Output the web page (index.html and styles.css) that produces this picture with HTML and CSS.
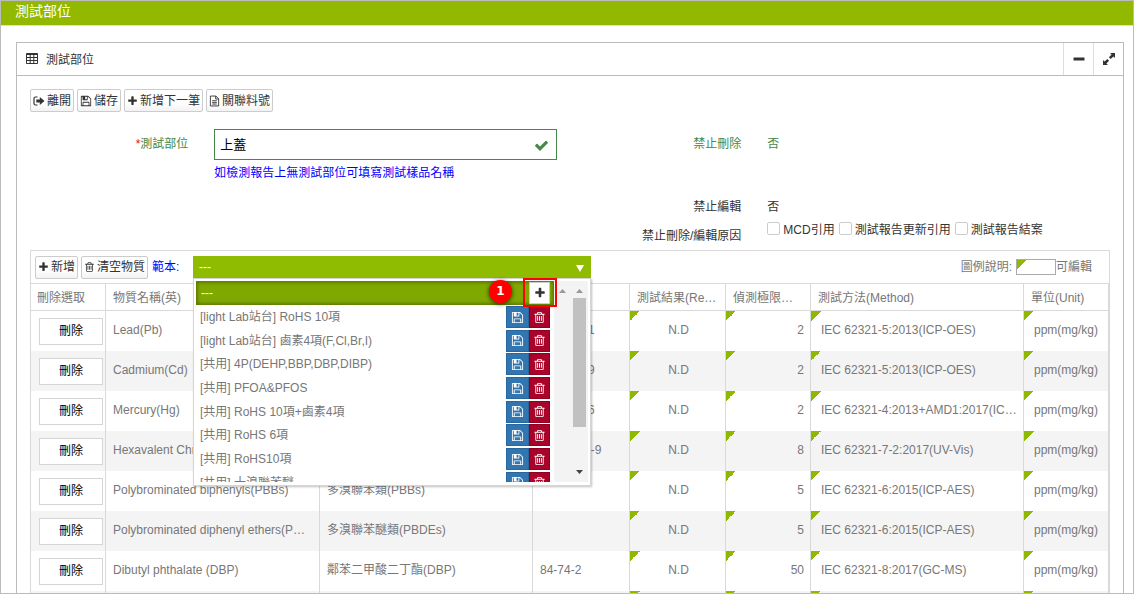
FILE: index.html
```html
<!DOCTYPE html>
<html lang="zh-Hant">
<head>
<meta charset="utf-8">
<title>測試部位</title>
<link rel="stylesheet" href="styles.css">
</head>
<body>
<svg class="sprite" aria-hidden="true">
  <symbol id="plus" viewBox="0 0 1792 1792"><path d="M1600 736v192q0 40-28 68t-68 28h-416v416q0 40-28 68t-68 28h-192q-40 0-68-28t-28-68v-416h-416q-40 0-68-28t-28-68v-192q0-40 28-68t68-28h416v-416q0-40 28-68t68-28h192q40 0 68 28t28 68v416h416q40 0 68 28t28 68z"/></symbol>
  <symbol id="trash" viewBox="0 0 1792 1792"><path d="M704 736v576q0 14-9 23t-23 9h-64q-14 0-23-9t-9-23v-576q0-14 9-23t23-9h64q14 0 23 9t9 23zm256 0v576q0 14-9 23t-23 9h-64q-14 0-23-9t-9-23v-576q0-14 9-23t23-9h64q14 0 23 9t9 23zm256 0v576q0 14-9 23t-23 9h-64q-14 0-23-9t-9-23v-576q0-14 9-23t23-9h64q14 0 23 9t9 23zm128 724v-948h-896v948q0 22 7 40.500t14.500 27 10.500 8.500h832q3 0 10.500-8.500t14.500-27 7-40.500zm-672-1076h448l-48-117q-7-9-17-11h-317q-10 2-17 11zm928 32v64q0 14-9 23t-23 9h-96v948q0 83-47 143.500t-113 60.500h-832q-66 0-113-58.500t-47-141.500v-952h-96q-14 0-23-9t-9-23v-64q0-14 9-23t23-9h309l70-167q15-37 54-63t79-26h320q40 0 79 26t54 63l70 167h309q14 0 23 9t9 23z"/></symbol>
  <symbol id="save" viewBox="0 0 1792 1792"><path d="M512 1536h768v-384h-768v384zm896 0h128v-896q0-14-10-38.500t-20-34.500l-281-281q-10-10-34-20t-39-10v416q0 40-28 68t-68 28h-576q-40 0-68-28t-28-68v-416h-128v1280h128v-416q0-40 28-68t68-28h832q40 0 68 28t28 68v416zm-384-928v-320q0-13-9.500-22.500t-22.500-9.500h-192q-13 0-22.500 9.500t-9.500 22.500v320q0 13 9.500 22.500t22.500 9.500h192q13 0 22.500-9.500t9.500-22.500zm640 32v928q0 40-28 68t-68 28h-1344q-40 0-68-28t-28-68v-1344q0-40 28-68t68-28h928q40 0 88 20t76 48l280 280q28 28 48 76t20 88z"/></symbol>
  <symbol id="check" viewBox="0 0 1792 1792"><path d="M1671 566q0 40-28 68l-724 724-136 136q-28 28-68 28t-68-28l-136-136-362-362q-28-28-28-68t28-68l136-136q28-28 68-28t68 28l294 295 656-657q28-28 68-28t68 28l136 136q28 28 28 68z"/></symbol>
  <symbol id="leave" viewBox="0 0 12 12"><path d="M4.500 2H2.500Q1 2 1 3.500v5Q1 10 2.500 10H4.500" fill="none" stroke="currentColor" stroke-width="1.200"/><path d="M3.300 4.600H6.800V2L11.500 6 6.800 10V7.400H3.300z"/></symbol>
  <symbol id="file" viewBox="0 0 12 12"><path d="M1.500.6h6l3 3v7.800h-9zM7.300.6v3.200h3.200M3.500 5.700h5M3.500 7.500h5M3.500 9.300h5" fill="none" stroke="currentColor" stroke-width="1"/></symbol>
  <symbol id="grid" viewBox="0 0 12 12"><path fill-rule="evenodd" d="M1 0h10q1 0 1 1v9q0 1-1 1H1q-1 0-1-1V1q0-1 1-1zM1 2v2h2.700V2zM4.700 2v2h2.600V2zM8.300 2v2H11V2zM1 5v2h2.700V5zM4.700 5v2h2.600V5zM8.300 5v2H11V5zM1 8v2h2.700V8zM4.700 8v2h2.600V8zM8.300 8v2H11V8z"/></symbol>
  <symbol id="expand" viewBox="0 0 12 12"><path d="M7 0h5v5l-1.600-1.600-2.700 2.700-1.800-1.800 2.700-2.700zM5 12H0V7l1.600 1.600 2.700-2.700 1.800 1.800-2.700 2.700z"/></symbol>
  <symbol id="minus" viewBox="0 0 12 12"><rect x=".5" y="4.500" width="11" height="3" rx=".5"/></symbol>
</svg>
<div class="page">
  <header class="page-title">測試部位</header>
  <main class="panel">
    <div class="panel-head">
      <svg class="icon"><use href="#grid"/></svg>
      <h1 class="panel-name">測試部位</h1>
      <button class="tool" aria-label="收合"><svg class="icon"><use href="#minus"/></svg></button>
      <button class="tool" aria-label="展開"><svg class="icon"><use href="#expand"/></svg></button>
    </div>
    <div class="actions">
      <button class="btn"><svg class="icon"><use href="#leave"/></svg>離開</button>
      <button class="btn"><svg class="icon"><use href="#save"/></svg>儲存</button>
      <button class="btn"><svg class="icon narrow"><use href="#plus"/></svg>新增下一筆</button>
      <button class="btn"><svg class="icon narrow"><use href="#file"/></svg>關聯料號</button>
    </div>
    <div class="form">
      <label class="label valid" for="part"><span class="required">*</span>測試部位</label>
      <div class="field">
        <div class="input-wrap"><input class="input" id="part" type="text" value="上蓋"><svg class="icon input-check"><use href="#check"/></svg></div>
        <p class="hint">如檢測報告上無測試部位可填寫測試樣品名稱</p>
      </div>
      <span class="label valid">禁止刪除</span>
      <span class="field value valid">否</span>
      <span class="label label-edit">禁止編輯</span>
      <span class="field value">否</span>
      <span class="label label-reason">禁止刪除/編輯原因</span>
      <div class="field checks">
        <label class="check"><input class="box" type="checkbox">MCD引用</label>
        <label class="check"><input class="box" type="checkbox">測試報告更新引用</label>
        <label class="check"><input class="box" type="checkbox">測試報告結案</label>
      </div>
    </div>
    <section class="grid">
      <div class="grid-bar">
        <button class="btn"><svg class="icon narrow"><use href="#plus"/></svg>新增</button>
        <button class="btn"><svg class="icon narrow"><use href="#trash"/></svg>清空物質</button>
        <label class="template-label" for="template">範本:</label>
        <div class="dropdown">
          <select class="select" id="template"><option>---</option></select>
          <svg class="caret" viewBox="0 0 8 7"><path d="M0 0h8L4 7z"/></svg>
          <div class="menu">
            <div class="menu-body">
              <div class="current">---<button class="add" aria-label="新增範本"><svg class="icon"><use href="#plus"/></svg></button></div>
              <ul class="items">
                <li class="item"><span class="item-name">[light Lab站台] RoHS 10項</span><button class="mini save" aria-label="儲存"><svg class="icon"><use href="#save"/></svg></button><button class="mini remove" aria-label="刪除"><svg class="icon"><use href="#trash"/></svg></button></li>
                <li class="item"><span class="item-name">[light Lab站台] 鹵素4項(F,Cl,Br,I)</span><button class="mini save" aria-label="儲存"><svg class="icon"><use href="#save"/></svg></button><button class="mini remove" aria-label="刪除"><svg class="icon"><use href="#trash"/></svg></button></li>
                <li class="item"><span class="item-name">[共用] 4P(DEHP,BBP,DBP,DIBP)</span><button class="mini save" aria-label="儲存"><svg class="icon"><use href="#save"/></svg></button><button class="mini remove" aria-label="刪除"><svg class="icon"><use href="#trash"/></svg></button></li>
                <li class="item"><span class="item-name">[共用] PFOA&amp;PFOS</span><button class="mini save" aria-label="儲存"><svg class="icon"><use href="#save"/></svg></button><button class="mini remove" aria-label="刪除"><svg class="icon"><use href="#trash"/></svg></button></li>
                <li class="item"><span class="item-name">[共用] RoHS 10項+鹵素4項</span><button class="mini save" aria-label="儲存"><svg class="icon"><use href="#save"/></svg></button><button class="mini remove" aria-label="刪除"><svg class="icon"><use href="#trash"/></svg></button></li>
                <li class="item"><span class="item-name">[共用] RoHS 6項</span><button class="mini save" aria-label="儲存"><svg class="icon"><use href="#save"/></svg></button><button class="mini remove" aria-label="刪除"><svg class="icon"><use href="#trash"/></svg></button></li>
                <li class="item"><span class="item-name">[共用] RoHS10項</span><button class="mini save" aria-label="儲存"><svg class="icon"><use href="#save"/></svg></button><button class="mini remove" aria-label="刪除"><svg class="icon"><use href="#trash"/></svg></button></li>
                <li class="item"><span class="item-name">[共用] 十溴聯苯醚</span><button class="mini save" aria-label="儲存"><svg class="icon"><use href="#save"/></svg></button><button class="mini remove" aria-label="刪除"><svg class="icon"><use href="#trash"/></svg></button></li>
              </ul>
            </div>
            <div class="track">
              <svg class="arrow dim" viewBox="0 0 7 4"><path d="M0 4h7L3.500 0z"/></svg>
            </div>
            <div class="track">
              <svg class="arrow dim" viewBox="0 0 7 4"><path d="M0 4h7L3.500 0z"/></svg>
              <div class="thumb"></div>
              <svg class="arrow end" viewBox="0 0 7 4"><path d="M0 0h7L3.500 4z"/></svg>
            </div>
            <div class="mark"></div>
            <div class="step">1</div>
          </div>
        </div>
        <div class="legend">圖例說明: <span class="swatch"></span>可編輯</div>
      </div>
      <table class="table">
        <colgroup><col class="c-del"><col class="c-name"><col class="c-name-zh"><col class="c-cas"><col class="c-result"><col class="c-limit"><col class="c-method"><col class="c-unit"></colgroup>
        <thead><tr><th>刪除選取</th><th>物質名稱(英)</th><th>物質名稱(中)</th><th>CAS No.</th><th>測試結果(Result)</th><th>偵測極限值(MDL)</th><th>測試方法(Method)</th><th>單位(Unit)</th></tr></thead>
        <tbody>
          <tr><td><button class="del">刪除</button></td><td>Lead(Pb)</td><td>鉛(Pb)</td><td>7439-92-1</td><td class="edit mid">N.D</td><td class="edit num">2</td><td class="edit">IEC 62321-5:2013(ICP-OES)</td><td class="edit">ppm(mg/kg)</td></tr>
          <tr><td><button class="del">刪除</button></td><td>Cadmium(Cd)</td><td>鎘(Cd)</td><td>7440-43-9</td><td class="edit mid">N.D</td><td class="edit num">2</td><td class="edit">IEC 62321-5:2013(ICP-OES)</td><td class="edit">ppm(mg/kg)</td></tr>
          <tr><td><button class="del">刪除</button></td><td>Mercury(Hg)</td><td>汞(Hg)</td><td>7439-97-6</td><td class="edit mid">N.D</td><td class="edit num">2</td><td class="edit">IEC 62321-4:2013+AMD1:2017(ICP-OES)</td><td class="edit">ppm(mg/kg)</td></tr>
          <tr><td><button class="del">刪除</button></td><td>Hexavalent Chromium(Cr6+)</td><td>六價鉻(Cr6+)</td><td>18540-29-9</td><td class="edit mid">N.D</td><td class="edit num">8</td><td class="edit">IEC 62321-7-2:2017(UV-Vis)</td><td class="edit">ppm(mg/kg)</td></tr>
          <tr><td><button class="del">刪除</button></td><td>Polybrominated biphenyls(PBBs)</td><td>多溴聯苯類(PBBs)</td><td></td><td class="edit mid">N.D</td><td class="edit num">5</td><td class="edit">IEC 62321-6:2015(ICP-AES)</td><td class="edit">ppm(mg/kg)</td></tr>
          <tr><td><button class="del">刪除</button></td><td>Polybrominated diphenyl ethers(PBDEs)</td><td>多溴聯苯醚類(PBDEs)</td><td></td><td class="edit mid">N.D</td><td class="edit num">5</td><td class="edit">IEC 62321-6:2015(ICP-AES)</td><td class="edit">ppm(mg/kg)</td></tr>
          <tr><td><button class="del">刪除</button></td><td>Dibutyl phthalate (DBP)</td><td>鄰苯二甲酸二丁酯(DBP)</td><td>84-74-2</td><td class="edit mid">N.D</td><td class="edit num">50</td><td class="edit">IEC 62321-8:2017(GC-MS)</td><td class="edit">ppm(mg/kg)</td></tr>
          <tr><td></td><td></td><td></td><td></td><td class="edit"></td><td class="edit"></td><td class="edit"></td><td class="edit"></td></tr>
        </tbody>
      </table>
    </section>
  </main>
</div>
</body>
</html>
```
FILE: styles.css
```css
* { box-sizing: border-box; }
body {
  margin: 0;
  background: #fff;
  color: #333;
  font: 12px/18px "Liberation Sans", "Noto Sans CJK TC", sans-serif;
}
button, input, select { font: inherit; color: inherit; margin: 0; }
.sprite { display: none; }
.icon { width: 12px; height: 12px; fill: currentColor; flex: none; }
.narrow { width: 11px; }

.page { height: 100vh; overflow: hidden; border: 1px solid #bbb; }
.page-title {
  height: 25px;
  padding: 0 14px;
  border-bottom: 1px solid #ddd;
  background: #92b800;
  color: #fff;
  font-size: 14px;
  line-height: 20px;
}
.panel { margin: 16px 9px 0 15px; border: 1px solid #bbb; }
.panel-head {
  display: flex;
  align-items: center;
  height: 33px;
  padding-left: 9px;
  border-bottom: 1px solid #bbb;
}
.panel-name { flex: 1; margin: 0 0 0 8px; padding-top: 2px; font-size: 12px; font-weight: normal; }
.tool {
  display: grid;
  place-items: center;
  width: 30px;
  height: 100%;
  padding: 0;
  border: 0;
  border-left: 1px solid #ddd;
  background: none;
}
.actions { display: flex; gap: 3px; padding: 13px 13px 0; }
.btn {
  display: flex;
  align-items: center;
  gap: 2px;
  height: 23px;
  padding: 0 2px;
  border: 1px solid #ccc;
  border-radius: 2px;
  background: linear-gradient(#fff 60%, #f3f3f3);
  line-height: 18px;
  white-space: nowrap;
}

.form { display: grid; grid-template-columns: 1fr 2fr 1fr 2fr; padding-top: 17px; }
.label { padding: 6px 13px 4px; text-align: right; }
.field { padding: 0 13px; }
.value { padding-top: 6px; }
.valid { color: #468847; }
.required { color: #f00; }
.label-edit, .label-reason { grid-column: 3; }
.label-edit, .label-edit + .value { padding-top: 16px; padding-bottom: 0; }
.label-reason { padding-top: 11px; }
.input-wrap { position: relative; }
.input {
  display: block;
  width: 100%;
  height: 31px;
  padding: 0 5px 2px;
  border: 1px solid #468847;
  background: #fff;
  color: #000;
  font-size: 13px;
}
.input-check { position: absolute; right: 8px; top: 9px; width: 15px; height: 15px; color: #468847; }
.hint { margin: 4px 0 0; color: #00f; }
.checks { display: flex; gap: 4px; padding-top: 5px; white-space: nowrap; }
.check { display: flex; align-items: center; gap: 3px; height: 18px; }
.box {
  appearance: none;
  width: 13px;
  height: 13px;
  margin-bottom: 4px;
  border: 1px solid #ccc;
  border-radius: 2px;
  background: #fff;
}

.grid { margin: 1px 13px 0; border: 1px solid #d9d9d9; color: #777; }
.grid-bar { display: flex; align-items: center; gap: 3px; height: 32px; padding: 0 17px 0 4px; }
.grid-bar .btn { color: #333; }
.template-label { color: #00f; width: 39px; padding-left: 1px; }
.dropdown { position: relative; width: 398px; }
.select {
  appearance: none;
  display: block;
  width: 100%;
  height: 22px;
  padding: 0 6px;
  border: 0;
  border-radius: 0;
  background: #8fbc00;
  color: #fff;
}
.caret { position: absolute; right: 7px; top: 9px; width: 8px; height: 7px; fill: #fff; }
.menu {
  position: absolute;
  z-index: 2;
  top: 22px;
  left: 0;
  right: 0;
  display: flex;
  height: 208px;
  padding: 2px 2px 3px;
  border: 1px solid #d5d5d5;
  background: #fff;
  box-shadow: 1px 1px 2px rgba(0, 0, 0, .25);
}
.menu-body { flex: 1; overflow: hidden; }
.current {
  display: flex;
  align-items: center;
  justify-content: space-between;
  height: 24px;
  padding: 0 4px 0 5px;
  background: #7fa800;
  box-shadow: inset 0 0 3px 2px #5e7d00;
  color: #fff;
}
.add { display: grid; place-items: center; width: 21px; height: 22px; padding: 0; border: 1px solid #ccc; background: #fff; color: #333; }
.items { display: grid; grid-auto-rows: 24px 23px 24px; margin: 0; padding: 0; list-style: none; }
.item { display: flex; align-items: center; padding: 0 4px; }
.item-name { flex: 1; }
.mini { display: grid; place-items: center; height: 22px; padding: 0; border: 1px solid; color: #fff; }
.mini .icon { width: 13px; height: 13px; }
.save { width: 23px; border-color: #2a669c; background: #3276b1; }
.remove { width: 21px; border-color: #900022; background: #a90329; }
.track { display: flex; flex-direction: column; align-items: center; width: 17px; padding: 8px 2px; background: #f3f3f3; }
.arrow { flex: none; width: 7px; height: 4px; fill: #444; }
.dim { fill: #999; }
.thumb { width: 13px; height: 129px; margin-top: 5px; background: #c1c1c1; }
.end { margin-top: auto; }
.mark { position: absolute; right: 33px; top: -1px; width: 34px; height: 29px; border: 2px solid #f00; }
.step {
  position: absolute;
  right: 78px;
  top: 1px;
  width: 23px;
  height: 23px;
  border-radius: 50%;
  background: #f00;
  box-shadow: 0 1px 4px rgba(0, 0, 0, .7);
  color: #fff;
  font: bold 12px/23px "DejaVu Sans", sans-serif;
  text-align: center;
}
.legend { display: flex; align-items: center; margin-left: auto; }
.swatch {
  width: 40px;
  height: 16px;
  margin-left: 4px;
  border: 1px solid #aaa;
}
.swatch, .table .edit {
  background-image: linear-gradient(to bottom right, #8fb900 50%, transparent 50%);
  background-size: 10px 10px;
  background-repeat: no-repeat;
}

.table { width: 100%; border-collapse: separate; border-spacing: 0; table-layout: fixed; }
.c-del { width: 75px; }
.c-name { width: 214px; }
.c-name-zh { width: 213px; }
.c-cas { width: 97px; }
.c-result { width: 96px; }
.c-limit { width: 85px; }
.c-method { width: 213px; }
.c-unit { width: 85px; }
.table th, .table td {
  padding: 0 7px 2px;
  border-right: 1px solid #d9d9d9;
  text-align: left;
  font-weight: normal;
  overflow: hidden;
  text-overflow: ellipsis;
  white-space: nowrap;
}
.table th { height: 28px; padding: 2px 7px 0; border-top: 1px solid #d9d9d9; border-bottom: 1px solid #d9d9d9; }
.table td { height: 40px; }
.table tr:nth-child(even) td { background-color: #f4f4f4; }
.table .edit { padding: 0 6px 2px 10px; }
.table .mid { padding: 0 4px 2px 6px; text-align: center; }
.table .num { text-align: right; }
.table th:first-child { padding-left: 6px; }
.table td:first-child { padding: 0 2px 0 8px; }
.del { display: block; width: 100%; height: 27px; padding: 0; border: 1px solid #d5d5d5; background: #fff; color: #000; }
```
